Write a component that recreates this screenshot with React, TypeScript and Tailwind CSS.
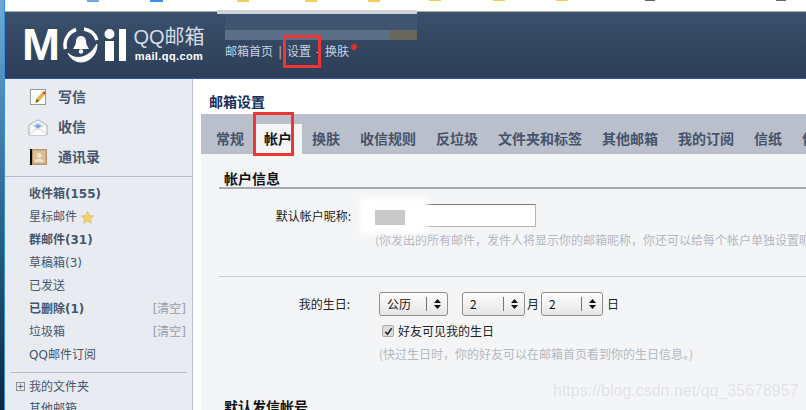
import { ReactNode } from "react"

const font = "font-['DejaVu_Sans','Noto_Sans_CJK_SC',sans-serif]"
const cjk = "font-['Noto_Sans_CJK_SC','Liberation_Sans',sans-serif]"

const tabs = ["常规", "帐户", "换肤", "收信规则", "反垃圾", "文件夹和标签", "其他邮箱", "我的订阅", "信纸", "信"]

function WriteIcon() {
  return (
    <svg width="17" height="17" viewBox="0 0 17 17">
      <rect x="0.5" y="0.5" width="15" height="15" fill="#fdfdfd" stroke="#9a9a9a" />
      <path d="M6 13.5 L6.8 10 L12.5 3.5 L14.6 5.4 L9 11.8 Z" fill="#f2b63c" stroke="#c98a1f" strokeWidth="0.6" />
      <path d="M12.5 3.5 L13.8 2 L16 4 L14.6 5.4 Z" fill="#d9483b" />
      <path d="M5.5 14 L6.8 10 L9 11.8 Z" fill="#5b4a32" />
    </svg>
  )
}

function InboxIcon() {
  return (
    <svg width="20" height="17" viewBox="0 0 20 17">
      <path d="M1 6 L10 0.8 L19 6 L19 16 L1 16 Z" fill="#f7f8fa" stroke="#a9adb5" />
      <path d="M3.5 6.5 L10 3 L16.5 6.5 L10 10.5 Z" fill="#d7e3f3" />
      <path d="M6.5 7 L10 5 L13.5 7 L10 9.5 Z" fill="#7fa3dc" />
      <path d="M1 16 L8 10 L12 10 L19 16" fill="#ffffff" stroke="#c3c7ce" strokeWidth="0.7" />
    </svg>
  )
}

function ContactIcon() {
  return (
    <svg width="17" height="16" viewBox="0 0 17 16">
      <rect x="0" y="0" width="17" height="16" fill="#b8966a" />
      <rect x="0" y="0" width="2" height="16" fill="#0c0a08" />
      <rect x="3" y="1.5" width="12.5" height="13" fill="#d8c19a" />
      <circle cx="9.2" cy="6.4" r="2.4" fill="#efe3cc" />
      <path d="M4.8 13 C5 10.4 7 9.8 9.2 9.8 C11.4 9.8 13.4 10.4 13.6 13 Z" fill="#efe3cc" />
    </svg>
  )
}

function Logo() {
  return (
    <svg width="106" height="34" viewBox="0 0 106 34" className="overflow-visible">
      <text x="0" y="31.5" fontFamily="Liberation Sans" fontWeight="700" fontSize="45" textLength="38" lengthAdjust="spacingAndGlyphs" fill="#ffffff">
        M
      </text>
      {/* ring with swoosh */}
      <path d="M43.5 21 A16.5 16.5 0 0 1 54 1.5" fill="none" stroke="#ffffff" strokeWidth="3.5" />
      <path d="M62 1 A16.5 16.5 0 0 1 75 12" fill="none" stroke="#ffffff" strokeWidth="3.5" />
      <path d="M46 25 C52 32 66 32 75 16 C75 28 66 34 59 34 C53 34 48 30 46 25 Z" fill="#ffffff" stroke="#ffffff" strokeWidth="1" />
      {/* bell */}
      <path d="M59 8 C62.5 8 64 11 64 13.5 C64 17 66 19 67 21 L51 21 C52 19 54 17 54 13.5 C54 11 55.5 8 59 8 Z" fill="#ffffff" />
      <circle cx="59" cy="23.5" r="2.2" fill="#ffffff" />
      {/* i and l */}
      <circle cx="87.5" cy="6" r="5" fill="#ffffff" />
      <rect x="83" y="13" width="9" height="20" fill="#ffffff" />
      <rect x="97" y="1" width="7" height="32" fill="#ffffff" />
    </svg>
  )
}

function Row({ bold, extra, children }: { bold?: boolean; extra?: boolean; children: ReactNode }) {
  return (
    <div className={`flex h-[22.9px] items-center justify-between pl-[24px] pr-[6px] text-[12px] text-[#47566f] ${bold ? "font-bold" : ""}`}>
      <span className="flex items-center gap-[4px]">{children}</span>
      {extra && <span className="text-[12px] font-normal text-[#9a9fa8]">[清空]</span>}
    </div>
  )
}

function BigRow({ icon, label }: { icon: ReactNode; label: string }) {
  return (
    <div className="flex h-[30px] items-center">
      <div className="flex w-[53px] justify-end pr-[9px]">
        <div className="flex w-[22px] justify-center">{icon}</div>
      </div>
      <span className="text-[14px] font-bold text-[#47566f]">{label}</span>
    </div>
  )
}

function Select({ value, width, gap }: { value: string; width: string; gap: string }) {
  return (
    <div className={`flex h-[24px] items-center rounded-[3px] border border-[#8e8e8e] bg-gradient-to-b from-[#fdfdfd] to-[#e6e6e6] text-[12px] text-[#111] ${width}`}>
      <span className={`pl-[7px] ${gap}`}>{value}</span>
      <span className="flex h-[14px] flex-1 flex-col items-center justify-center border-l border-[#777] text-[#111]">
        <svg width="7" height="10" viewBox="0 0 7 10">
          <path d="M3.5 0 L7 4 L0 4 Z M3.5 10 L7 6 L0 6 Z" fill="#111" />
        </svg>
      </span>
    </div>
  )
}

export default function App() {
  return (
    <div className={`relative flex h-[410px] w-[806px] overflow-hidden bg-white ${cjk}`}>
      {/* desktop edge */}
      <div className="h-full w-[5px] border-r border-[#2f8ee6] bg-gradient-to-b from-[#6fa8d8] via-[#2b6a8f] to-[#10263f]" />

      <div className="flex min-w-0 flex-1 flex-col">
        {/* top strip */}
        <div className="relative h-[12px] border-b border-[#a9adb2] bg-white" />

        {/* header */}
        <div className="flex h-[67px] items-start border-b border-[#2a5aa0] bg-gradient-to-b from-[#3a506b] to-[#2d3e58]">
          <div className="ml-[17px] mt-[16px] flex">
            <Logo />
          </div>
          <div className="ml-[5px] mt-[13px] flex w-[72px] flex-col items-center">
            <span className="whitespace-nowrap font-['Liberation_Sans','Noto_Sans_CJK_SC',sans-serif] text-[20px] leading-[25px] text-[#d5dce5]">QQ邮箱</span>
            <span className="font-['Liberation_Sans'] text-[11px] font-bold leading-[13px] tracking-[0.4px] text-white">mail.qq.com</span>
          </div>
          <div className="ml-[20px] mt-[30px] flex items-center text-[12px] leading-[18px] text-[#c8d3e2]">
            <span>邮箱首页</span>
            <span className="w-[14px] text-center">|</span>
            <span>设置</span>
            <span className="w-[14px] text-center">-</span>
            <span className="relative">
              换肤
              <span className="absolute right-[-8px] top-[2px] h-[6px] w-[6px] rounded-full bg-[#d8332a]" />
            </span>
          </div>
        </div>

        <div className="flex min-h-0 flex-1">
          {/* sidebar */}
          <div className={`h-full w-[188px] shrink-0 border-r border-[#b5bfce] bg-[#e8ebf0] ${font}`}>
            <div className="h-[83px] pt-[3px]">
              <BigRow icon={<WriteIcon />} label="写信" />
              <BigRow icon={<InboxIcon />} label="收信" />
              <BigRow icon={<ContactIcon />} label="通讯录" />
            </div>
            <div className="mt-[14px] h-px bg-[#b5bfce]" />
            <div className="pt-[6px]">
              <Row bold>收件箱(155)</Row>
              <Row>
                星标邮件
                <svg width="13" height="13" viewBox="0 0 24 24">
                  <path d="M12 1 L15.4 8.3 L23.4 9.2 L17.5 14.7 L19.1 22.6 L12 18.6 L4.9 22.6 L6.5 14.7 L0.6 9.2 L8.6 8.3 Z" fill="#f3cf6b" stroke="#e3b04b" />
                </svg>
              </Row>
              <Row bold>群邮件(31)</Row>
              <Row>草稿箱(3)</Row>
              <Row>已发送</Row>
              <Row bold extra>已删除(1)</Row>
              <Row extra>垃圾箱</Row>
              <Row>QQ邮件订阅</Row>
            </div>
            <div className="mx-[5px] mt-[6px] h-px bg-[#b5bfce]" />
            <div className="flex h-[27px] items-center pl-[11px] text-[12px] text-[#47566f]">
              <span className="mr-[4px] flex h-[9px] w-[9px] items-center justify-center border border-[#8b8f96] text-[9px] leading-none">+</span>
              我的文件夹
            </div>
            <div className="pl-[24px] text-[12px] leading-[18px] text-[#47566f]">其他邮箱</div>
          </div>

          {/* main */}
          <div className="min-w-0 flex-1 bg-white pl-[8px]">
            <div className="flex h-[35px] items-center pl-[8px] pt-[9px] text-[14px] font-bold text-[#14305a]">邮箱设置</div>
            <div className="flex h-[40px] items-end whitespace-nowrap bg-[#b9bfcb] pl-[5px]">
              {tabs.map((t) => (
                <div
                  key={t}
                  className={`flex h-[30px] items-center px-[10px] pb-[1px] text-[14px] font-bold ${t === "帐户" ? "bg-[#f4f5f7] text-[#111]" : "text-[#46536a]"}`}
                >
                  {t}
                </div>
              ))}
            </div>

            {/* settings panel */}
            <div className="h-[260px] overflow-hidden bg-[#f4f5f7] pl-[18px]">
              <div className="mt-[16px] h-[19px] border-b-2 border-[#a5a9b8] pl-[5px] text-[14px] font-bold leading-[17px] text-[#111]">帐户信息</div>

              <div className="mt-[15px] flex h-[23px] items-center">
                <span className="w-[132px] text-right text-[12px] text-[#222]">默认帐户昵称:</span>
                <div className="ml-[24px] h-[23px] w-[161px] border border-[#b5b5b5] border-t-[#7a7a7a] bg-white" />
              </div>
              <div className="mt-[4px] whitespace-nowrap pl-[156px] text-[12px] leading-[18px] text-[#b3b8c2]">(你发出的所有邮件，发件人将显示你的邮箱昵称，你还可以给每个帐户单独设置昵称)</div>

              <div className="mt-[27px] h-px bg-[#c5cde0]" />

              <div className="mt-[15px] flex items-center text-[12px] text-[#222]">
                <span className="w-[131px] text-right">我的生日:</span>
                <div className="ml-[29px] flex items-center">
                  <Select value="公历" width="w-[69px]" gap="w-[46px]" />
                  <div className="w-[14px]" />
                  <Select value="2" width="w-[63px]" gap="w-[40px]" />
                  <span className="mx-[2px]">月</span>
                  <Select value="2" width="w-[62px]" gap="w-[39px]" />
                  <span className="ml-[4px]">日</span>
                </div>
              </div>
              <div className="mt-[6px] flex h-[18px] items-center pl-[163px] text-[12px] text-[#222]">
                <span className="mr-[4px] flex h-[12px] w-[12px] items-center justify-center rounded-[2px] border border-[#aaa] bg-[#ddd]">
                  <svg width="9" height="9" viewBox="0 0 10 10">
                    <path d="M1.5 5.5 L4 8 L8.5 1.5" fill="none" stroke="#333" strokeWidth="2" />
                  </svg>
                </span>
                好友可见我的生日
              </div>
              <div className="mt-[5px] pl-[160px] text-[12px] leading-[18px] text-[#b3b8c2]">(快过生日时，你的好友可以在邮箱首页看到你的生日信息。)</div>

              <div className="mt-[34px] pl-[5px] text-[14px] font-bold leading-[18px] text-[#111]">默认发信帐号</div>
            </div>
          </div>
        </div>
      </div>

      {/* blurred redaction smudges */}
      <div className="absolute left-[217px] top-[10px] h-[4px] w-[200px] bg-[#d0d4d9]" />
      <div className="absolute left-[225px] top-[14px] h-[16px] w-[192px] bg-[#3f546e]" />
      <div className="absolute left-[225px] top-[30px] h-[10px] w-[170px] bg-[#5c6f88]" />
      <div className="absolute left-[390px] top-[30px] h-[10px] w-[27px] bg-[#66665a]" />
      <div className="absolute left-[360px] top-[198px] h-[36px] w-[68px] bg-white blur-[3px]" />
      <div className="absolute left-[375px] top-[210px] h-[15px] w-[30px] bg-[#c9c9c9]" />

      {/* marker rectangles drawn on the screenshot */}
      <div className="absolute left-[283px] top-[35px] h-[33px] w-[38px] border-[3px] border-[#f03535]" />
      <div className="absolute left-[253px] top-[112px] h-[44px] w-[41px] border-[3px] border-[#f03535]" />

      {/* bookmark bar remnants */}
      <div className="absolute left-[87px] top-0 h-[2px] w-[12px] bg-[#6fa8e8]" />
      <div className="absolute left-[150px] top-0 h-[2px] w-[13px] bg-[#3d8ef0]" />
      <div className="absolute left-[237px] top-0 h-[2px] w-[12px] bg-[#f2cf5a]" />
      <div className="absolute left-[305px] top-0 h-[2px] w-[12px] bg-[#f2cf5a]" />
      <div className="absolute left-[368px] top-0 h-[2px] w-[12px] bg-[#f2cf5a]" />
      <div className="absolute left-[429px] top-0 h-[1px] w-[12px] bg-[#f2cf5a]" />
      <div className="absolute left-[493px] top-0 h-[1px] w-[12px] bg-[#f2cf5a]" />
      <div className="absolute left-[556px] top-0 h-[1px] w-[12px] bg-[#f2cf5a]" />
      <div className="absolute left-[645px] top-0 h-[1px] w-[10px] bg-[#666]" />
      <div className="absolute left-[776px] top-0 h-[1px] w-[10px] bg-[#666]" />

      {/* watermark */}
      <div className="absolute left-[553px] top-[380px] font-['Liberation_Sans'] text-[16px] leading-[22px] text-[#d8dadd] opacity-70">https://blog.csdn.net/qq_35678957</div>
    </div>
  )
}
